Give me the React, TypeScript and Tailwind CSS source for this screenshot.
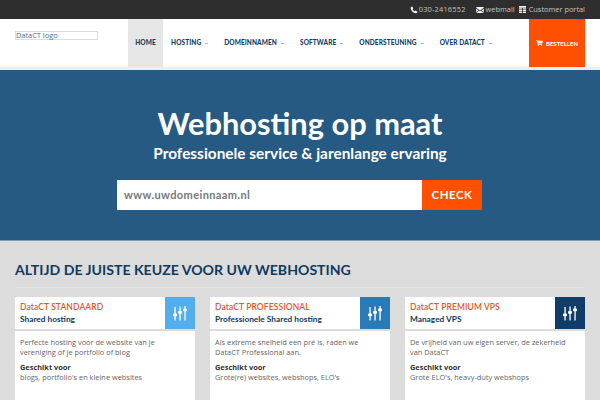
import React from "react";

const sans = "font-['Lato','Liberation_Sans',sans-serif]";
const body = "font-['Open_Sans','Liberation_Sans',sans-serif]";

function Caret() {
  return <span className="ml-[4px] inline-block w-[3px] h-[1px] bg-[#a8b2ba] translate-y-[-1px]" />;
}

function Sliders() {
  return (
    <svg width="14" height="15" viewBox="0 0 14 15" fill="white">
      <rect x="1.4" y="1" width="1.3" height="13.5" />
      <rect x="6.4" y="0.5" width="1.3" height="14" />
      <rect x="11.4" y="0" width="1.3" height="14.5" />
      <rect x="0" y="7.5" width="4" height="2.8" rx="0.8" />
      <rect x="5" y="5" width="4" height="2.8" rx="0.8" />
      <rect x="10" y="2.5" width="4" height="2.8" rx="0.8" />
    </svg>
  );
}

function Card({ title, sub, color, text, fit }: { title: string; sub: string; color: string; text: React.ReactNode; fit: string }) {
  return (
    <div className="w-[180px] h-[120px] bg-white shrink-0">
      <div className="flex h-[32px] border-b-2 border-[#dcdcdc] box-content">
        <div className="flex-1 pl-[5px] pt-[4px]">
          <div className={`${sans} text-[8.5px] leading-[12px] font-semibold tracking-[0.1px] text-[#e8571f] whitespace-nowrap`}>{title}</div>
          <div className={`${sans} text-[8.3px] leading-[12px] font-bold text-[#0f3a5f] whitespace-nowrap`}>{sub}</div>
        </div>
        <div className={`w-[30px] ${color} flex items-center justify-center`}>
          <Sliders />
        </div>
      </div>
      <div className={`${body} px-[5px] pt-[6px] text-[7.4px] leading-[10px] text-[#666]`}>
        <p className="whitespace-nowrap">{text}</p>
        <p className="mt-[5px] font-bold text-[#333]">Geschikt voor</p>
        <p className="whitespace-nowrap">{fit}</p>
      </div>
    </div>
  );
}

export default function App() {
  const nav = ["HOSTING", "DOMEINNAMEN", "SOFTWARE", "ONDERSTEUNING", "OVER DATACT"];
  return (
    <div className="w-[600px] h-[400px] overflow-hidden bg-[#dcdcdc]">
      <div className={`${body} h-[19px] bg-[#2e2e2e] flex justify-end items-center pr-[15px] text-[7.4px] text-[#c4c4c4]`}>
        <svg width="8" height="8" viewBox="0 0 24 24" fill="#f0f0f0" className="mr-[1px]">
          <path d="M6.6 1.5l3.6 5.6-2.4 2.6c1.2 2.8 3.6 5.2 6.4 6.4l2.6-2.4 5.6 3.6c-.6 3-3 5-5.6 4.6C9 21 3 15 1.9 7.1 1.5 4.5 3.6 2.1 6.6 1.5z" />
        </svg>
        <span className="tracking-[0.2px]">030-2416552</span>
        <svg width="8" height="6" viewBox="0 0 18 14" fill="#f0f0f0" className="ml-[10px] mr-[2px]">
          <path d="M1 0h16a1 1 0 011 1v1L9 8 0 2V1a1 1 0 011-1zM0 4l5.5 3.6L0 12zM18 4v8l-5.5-4.4zM6.8 8.5L9 10l2.2-1.5L18 14H0z" />
        </svg>
        <span>webmail</span>
        <svg width="7" height="7" viewBox="0 0 16 16" fill="#f0f0f0" className="ml-[4px] mr-[3px]">
          <path d="M0 0h16v4H0zM0 5h7v3H0zM9 5h7v3H9zM0 9h7v3H0zM9 9h7v3H9zM0 13h7v3H0zM9 13h7v3H9z" />
        </svg>
        <span>Customer portal</span>
      </div>
      <div className="h-[48px] bg-white flex">
        <div className="w-[128px] pl-[15px] pt-[12px]">
          <div className={`${body} w-[83px] h-[9px] border border-[#dcdcdc] text-[7.4px] leading-[7px] text-[#4a6f8a]`}>DataCT logo</div>
        </div>
        <div className={`${sans} w-[35px] bg-[#e6e6e6] flex items-center justify-center text-[6.5px] font-black tracking-[0.1px] text-[#123f64]`}>HOME</div>
        <div className={`${sans} flex items-center gap-[16px] pl-[8px] text-[6.5px] font-black tracking-[0.1px] text-[#123f64]`}>
          {nav.map((n) => (
            <span key={n} className="whitespace-nowrap">
              {n}
              <Caret />
            </span>
          ))}
        </div>
        <div className="flex-1" />
        <div className={`${sans} w-[56px] mr-[15px] bg-[#ff4f00] flex items-center justify-center text-[6px] font-black text-white whitespace-nowrap`}>
          <svg width="7" height="6" viewBox="0 0 16 14" fill="white" className="mr-[3px]">
            <path d="M0 0h3l.6 2H16l-1.5 6H5.2l.3 1.5H14V11H4L1.8 1.5H0z" />
            <circle cx="5.5" cy="12.7" r="1.3" />
            <circle cx="12.5" cy="12.7" r="1.3" />
          </svg>
          BESTELLEN
        </div>
      </div>
      <div className="h-[3px] bg-[#eceef2]" />
      <div className="h-[170px] bg-[#265a83] flex flex-col items-center border-b border-[#7f9bb5] box-content">
        <h1 className={`${sans} mt-[34px] text-[30.8px] leading-[40px] font-bold text-white`}>Webhosting op maat</h1>
        <p className={`${sans} text-[15.4px] leading-[18px] font-bold text-white`}>Professionele service &amp; jarenlange ervaring</p>
        <div className="mt-[18px] ml-[-1px] flex h-[30px] w-[365px]">
          <div className={`${sans} flex-1 bg-white flex items-center pl-[7px] text-[11px] font-bold tracking-[0.4px] text-[#777]`}>www.uwdomeinnaam.nl</div>
          <div className={`${sans} w-[60px] bg-[#ff4f00] flex items-center justify-center text-[11.5px] font-bold tracking-[0.5px] text-white`}>CHECK</div>
        </div>
      </div>
      <div className="px-[15px]">
        <h2 className={`${sans} pt-[17px] text-[14.1px] leading-[24px] font-bold text-[#0f3a5f] whitespace-nowrap`}>ALTIJD DE JUISTE KEUZE VOOR UW WEBHOSTING</h2>
        <div className="mt-[5px] h-[1px] bg-[#e6e6e6]" />
        <div className="mt-[9px] flex justify-between">
          <Card title="DataCT STANDAARD" sub="Shared hosting" color="bg-[#55aeec]" text={<>Perfecte hosting voor de website van je<br />vereniging of je portfolio of blog</>} fit="blogs, portfolio's en kleine websites" />
          <Card title="DataCT PROFESSIONAL" sub="Professionele Shared hosting" color="bg-[#2a7ab5]" text={<>Als extreme snelheid een pré is, raden we<br />DataCT Professional aan.</>} fit="Grote(re) websites, webshops, ELO's" />
          <Card title="DataCT PREMIUM VPS" sub="Managed VPS" color="bg-[#0f3c68]" text={<>De vrijheid van uw eigen server, de zekerheid<br />van DataCT</>} fit="Grote ELO's, heavy-duty webshops" />
        </div>
      </div>
    </div>
  );
}
